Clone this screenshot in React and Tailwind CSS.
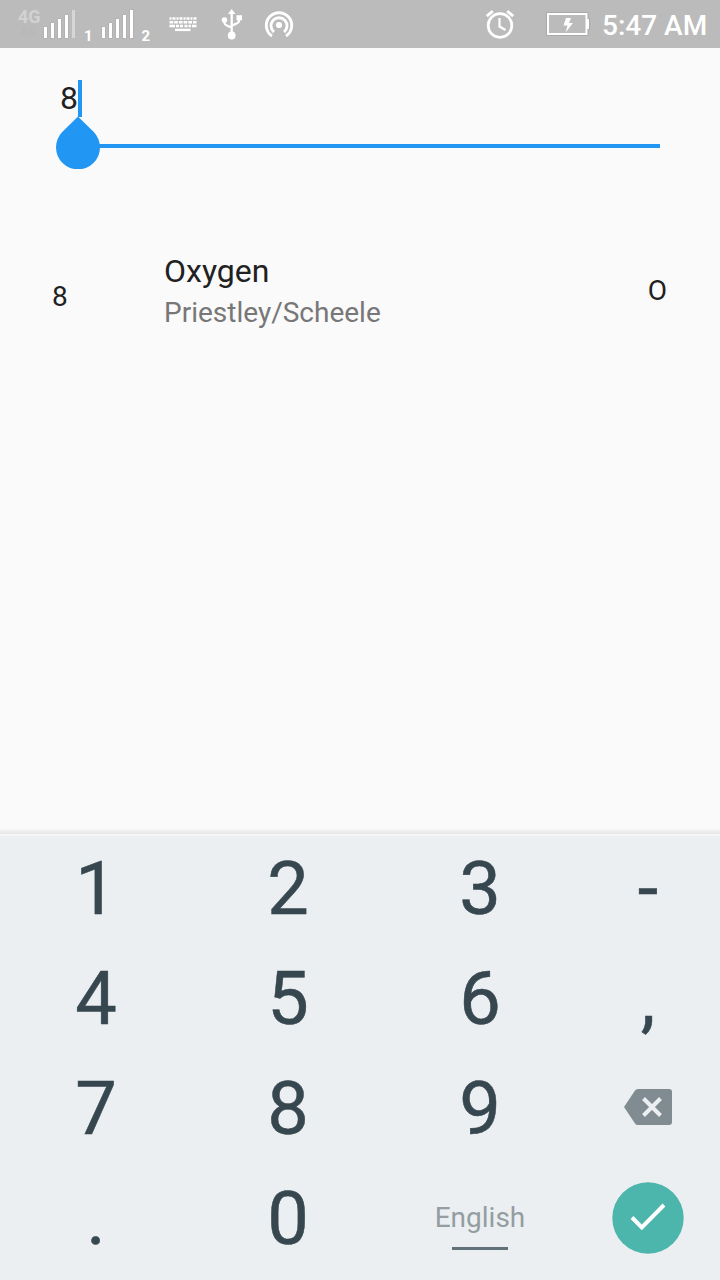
const KEY = 'flex h-[110px] items-center justify-center text-[74px] leading-none text-[#37474f] [-webkit-text-stroke:0.5px_#37474f]';

function Key({ children }) {
  return <button className={KEY}>{children}</button>;
}

function StatusBar() {
  return (
    <header className="flex h-12 shrink-0 bg-[#bbbbbb] font-medium text-white">
      <svg className="h-12 w-[160px]" viewBox="0 0 160 48" fill="#fff">
        <text x="18" y="23" fontSize="18" fontWeight="700" fill="#d2d2d2">4G</text>
        <text x="20" y="37" fontSize="13" fontWeight="700" fill="#b8b8b8">4G</text>
        <g stroke="#a9a9a9" strokeWidth="1" paintOrder="stroke">
          <path d="M44 27h3v11h-3zM51 23h3v15h-3zM58 19h3v19h-3zM65 15h3v23h-3z" />
          <path d="M102 27h3v11h-3zM109 23h3v15h-3zM116 19h3v19h-3zM123 15h3v23h-3zM130 10h3v28h-3z" />
        </g>
        <path d="M72 10h3v28h-3z" fill="#d6d6d6" />
        <text x="84" y="41" fontSize="15" fontWeight="700">1</text>
        <text x="141.500" y="41" fontSize="15" fontWeight="700">2</text>
      </svg>
      <svg className="h-12 w-[145px]" viewBox="160 0 145 48" fill="none" stroke="#fff">
        <g strokeWidth="2.400">
          <path d="M169.500 18.500h27" strokeDasharray="2 1 3 1" />
          <path d="M169.500 22.200h27" strokeDasharray="3.700 1" />
          <path d="M169.500 26h5.500M176 26h3M180 26h3M184.500 26h3M188.500 26h2.500M192 26h4.500" />
          <path d="M175 29.900h15.500" />
        </g>
        <path d="M231.700 12v24M224.500 20v3q0 2 7 4.500M239 17v4q0 2-7 4.500" strokeWidth="2.300" />
        <path d="M231.700 9l3.800 5h-7.600zM236.500 15.300h5.500v5h-5.500z" fill="#fff" stroke="none" />
        <circle cx="224.500" cy="20" r="2.800" fill="#fff" stroke="none" />
        <circle cx="231.700" cy="35.500" r="3.900" fill="#fff" stroke="none" />
        <circle cx="279" cy="25" r="3.100" fill="#fff" stroke="none" />
        <path d="M274 32A8 8 0 1 1 284 32M272 36A12.700 12.700 0 1 1 286 36" strokeWidth="2.900" />
      </svg>
      <svg className="ml-auto h-12 w-[130px]" viewBox="470 0 130 48" fill="none" stroke="#fff">
        <circle cx="500" cy="25.500" r="11.800" strokeWidth="2.700" />
        <path d="M499.500 18v8.500l6 3.500" strokeWidth="2.200" />
        <path d="M486.800 16.200l6-5M513.200 16.200l-6-5" strokeWidth="2.800" />
        <path d="M547 13h40.500v6h1.500v10h-1.500v6H547z" stroke="#a9a9a9" strokeWidth="2" />
        <path d="M548 14h38.500v20H548z" strokeWidth="2" />
        <path d="M586 19h3v10h-3z" fill="#fff" stroke="none" />
        <path d="M566 18h5l-2 5h4l-7.500 9.500 2-7h-4z" fill="#fff" stroke="none" />
      </svg>
      <time className="w-[120px] pt-0.5 pl-0.5 text-[28px] leading-12 whitespace-nowrap">5:47 AM</time>
    </header>
  );
}

export default function App() {
  return (
    <div className="flex h-[1280px] w-[720px] flex-col overflow-hidden bg-[#fafafa] font-['Roboto',sans-serif] text-[#212121]">
      <StatusBar />
      <main className="flex flex-1 flex-col">
        <div className="relative mx-[60px] mt-8 h-[68px] border-b-4 border-[#2196f3]">
          <div className="flex h-[37px] items-start">
            <span className="text-[32px] leading-9">8</span>
            <span className="h-full w-1 bg-[#2196f3]" />
          </div>
          <svg className="absolute top-9 -left-1 h-[53px] w-11" viewBox="0 0 44 53" fill="#2196f3">
            <path d="M22 0.500L37.800 16A22 22 0 1 1 6.200 16Z" />
          </svg>
        </div>
        <div className="mt-[103px] flex h-20 pr-[53px] pl-[52px]">
          <span className="w-28 pt-[30px] text-[28px] leading-8">8</span>
          <div className="flex-1">
            <h1 className="text-[32px] leading-[40px]">Oxygen</h1>
            <p className="pt-0.5 text-[28px] leading-[40px] text-[#777777]">Priestley/Scheele</p>
          </div>
          <span className="pt-6 text-[28px] leading-8">O</span>
        </div>
      </main>
      <div className="h-1.5 bg-linear-to-b from-[#fafafa] to-[#e6e6e6]" />
      <section className="grid h-[446px] grid-cols-[192px_192px_192px_144px] content-start bg-[#ebeff2] shadow-[inset_0_2px_0_#f5f6f6]">
        <Key>1</Key><Key>2</Key><Key>3</Key><Key>-</Key>
        <Key>4</Key><Key>5</Key><Key>6</Key><Key>,</Key>
        <Key>7</Key><Key>8</Key><Key>9</Key>
        <button className="flex items-center justify-center pb-1" aria-label="Delete">
          <svg className="h-9 w-12" viewBox="0 0 48 36">
            <path d="M14 0H45Q48 0 48 3V33Q48 36 45 36H14Q12 36 11 34.500L0 18 11 1.500Q12 0 14 0Z" fill="#808c91" />
            <path d="M19.500 9.500l17 17M36.500 9.500l-17 17" stroke="#ebeff2" strokeWidth="4" />
          </svg>
        </button>
        <Key>.</Key><Key>0</Key>
        <button className="flex flex-col items-center pt-[38px] text-[28px] leading-8 text-[#949da1]">
          English
          <span className="mt-[13px] h-[3px] w-14 bg-[#62727a]" />
        </button>
        <button className="flex items-center justify-center pb-[3px]" aria-label="Done">
          <svg className="size-[72px]" viewBox="0 0 72 72">
            <circle cx="36" cy="36" r="35.700" fill="#4db6ac" />
            <path d="M20 35.500l9.800 9.800L52 23" fill="none" stroke="#fff" strokeWidth="4" />
          </svg>
        </button>
      </section>
    </div>
  );
}
